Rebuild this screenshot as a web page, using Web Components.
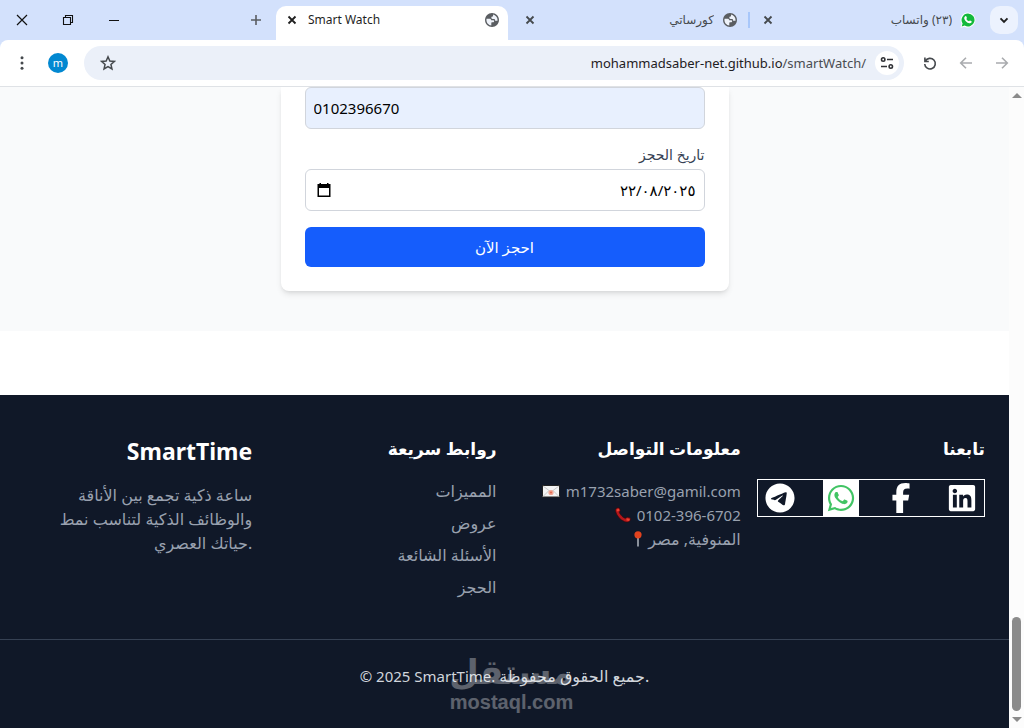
<!DOCTYPE html>
<html lang="ar">
<head>
<meta charset="utf-8">
<title>Smart Watch</title>
<style>
  html, body { margin: 0; height: 100%; }
  body { font-family: "Noto Sans", "DejaVu Sans", sans-serif; overflow: hidden; background: #fff; }
</style>
</head>
<body>
<browser-window>
  <tab-strip slot="chrome"></tab-strip>
  <tool-bar slot="chrome"></tool-bar>
  <booking-section></booking-section>
  <site-footer></site-footer>
  <scroll-track slot="scroll"></scroll-track>
</browser-window>

<script>
const ICONS = {
  close: ['0 0 16 16', '<path d="M4.500 4.500l7 7M11.500 4.500l-7 7" stroke="currentColor" stroke-width="1.800" fill="none"/>'],
  winclose: ['0 0 16 16', '<path d="M3 3l10 10M13 3L3 13" stroke="currentColor" stroke-width="1.200" fill="none"/>'],
  restore: ['0 0 16 16', '<path d="M3.500 5.500h7v7h-7zM5.500 5.500v-2h7v7h-2" stroke="currentColor" stroke-width="1.100" fill="none"/>'],
  minimize: ['0 0 16 16', '<path d="M3 8.500h10" stroke="currentColor" fill="none"/>'],
  plus: ['0 0 16 16', '<path d="M8 3v10M3 8h10" stroke="currentColor" stroke-width="1.600" fill="none"/>'],
  chevron: ['0 0 16 16', '<path d="M4.500 6.300L8 9.800l3.500-3.500" stroke="currentColor" stroke-width="1.900" fill="none"/>'],
  globe: ['0.500 0.500 23 23', '<path fill="currentColor" d="M12 2C6.480 2 2 6.480 2 12s4.480 10 10 10 10-4.480 10-10S17.520 2 12 2z"/><path fill="#eef2f9" d="M11 19.930c-3.950-.49-7-3.850-7-7.930 0-.62.08-1.210.21-1.790h4.300c1.500 0 2.200.9 2.400 2h2.600c1 0 1.500.6 1.500 1.500s-.6 1.500-1.500 1.500h-1.600c-.6 0-.9.400-.9 1zM13.500 4.200c3.700.8 6.500 4 6.500 7.800 0 .400 0 .700-.1 1h-2.400c-.9 0-1.500-.6-1.500-1.500v-1h-3.300c-1 0-1.700-.7-1.700-1.700s.7-1.700 1.700-1.700c.5 0 .8-.3.8-.8z"/>'],
  wabadge: ['0 0 16 16', '<path fill="#fff" d="M8 .5a7.500 7.500 0 1 1-3.500 14.200L.5 15.800l1.100-4A7.500 7.500 0 0 1 8 .5z"/><path fill="#13b93b" d="M8 1.500a6.500 6.500 0 1 1-3.300 12.100l-3 .9.900-3A6.500 6.500 0 0 1 8 1.500z"/><path fill="#fff" d="M5.300 4.200c.4-.3.8-.2 1 .2l.6 1.300c.1.300 0 .5-.6 1.200.6 1.100 1.500 1.900 2.700 2.400.7-.8.800-.9 1.100-.8l1.400.7c.3.200.3.600.1 1.100-.4.800-1.300 1.200-2.300 1-2.500-.6-4.400-2.500-5-4.600-.2-1 .2-1.900 1-2.500z"/>'],
  dots: ['0 0 16 16', '<g fill="currentColor"><circle cx="8" cy="2.700" r="1.500"/><circle cx="8" cy="8" r="1.500"/><circle cx="8" cy="13.300" r="1.500"/></g>'],
  star: ['0 0 16 16', '<path d="M8 1.800l1.850 4.150 4.500.45-3.400 3 1 4.450L8 11.500l-3.950 2.350 1-4.450-3.400-3 4.500-.45z" stroke="currentColor" stroke-width="1.500" fill="none"/>'],
  tune: ['0 0 16 16', '<g stroke="currentColor" stroke-width="1.600" fill="none"><circle cx="4.200" cy="4.500" r="1.700"/><path d="M8 4.500h6M2 11.500h6"/><circle cx="11.800" cy="11.500" r="1.700"/></g>'],
  reload: ['0 0 16 16', '<path d="M2.900 2.600v3.900h3.900M3.300 6.200A5.300 5.300 0 1 1 2.700 9" stroke="currentColor" stroke-width="1.600" fill="none"/>'],
  back: ['0 0 16 16', '<path d="M14 8H3M8 2.700L2.700 8 8 13.300" stroke="currentColor" stroke-width="1.600" fill="none"/>'],
  forward: ['0 0 16 16', '<path d="M2 8h11M8 2.700L13.300 8 8 13.300" stroke="currentColor" stroke-width="1.600" fill="none"/>'],
  calendar: ['0 0 16 16', '<path fill="currentColor" d="M3.500 1h1.500v1h6V1h1.500v1H14.500v13h-13V2h2zM3 6v7.500h10V6z" fill-rule="evenodd"/>'],
  telegram: ['0 0 496 512', '<path fill="currentColor" d="M248 8C111 8 0 119 0 256s111 248 248 248 248-111 248-248S385 8 248 8zm115 168.700c-3.700 39.200-19.900 134.400-28.100 178.300-3.500 18.600-10.300 24.800-16.900 25.400-14.400 1.300-25.300-9.500-39.300-18.700-21.800-14.300-34.200-23.200-55.300-37.200-24.500-16.100-8.600-25 5.300-39.500 3.700-3.800 67.100-61.500 68.300-66.700.2-.7.3-3.100-1.200-4.400s-3.600-.8-5.100-.5q-3.300.7-104.600 69.100-14.800 10.200-26.900 9.900c-8.900-.2-25.900-5-38.600-9.100-15.500-5-27.900-7.700-26.800-16.300q.8-6.700 18.500-13.700 108.400-47.200 144.600-62.300c68.900-28.600 83.200-33.600 92.500-33.800 2.100 0 6.600.5 9.600 2.900a10.500 10.500 0 0 1 3.500 6.700A43.800 43.800 0 0 1 363 176.700z"/>'],
  whatsapp: ['0 0 448 512', '<path fill="currentColor" d="M380.900 97.100C339 55.100 283.200 32 223.900 32c-122.400 0-222 99.600-222 222 0 39.100 10.200 77.300 29.600 111L0 480l117.700-30.900c32.400 17.700 68.900 27 106.100 27h.1c122.300 0 224.100-99.600 224.100-222 0-59.300-25.200-115-67.100-157zm-157 341.600c-33.200 0-65.700-8.900-94-25.700l-6.700-4-69.800 18.300L72 359.200l-4.400-7c-18.500-29.400-28.200-63.300-28.200-98.200 0-101.700 82.800-184.500 184.600-184.500 49.300 0 95.600 19.200 130.400 54.100 34.800 34.900 56.200 81.200 56.100 130.500 0 101.800-84.900 184.600-186.600 184.600zm101.200-138.200c-5.500-2.800-32.800-16.200-37.900-18-5.100-1.900-8.800-2.800-12.500 2.800-3.700 5.600-14.300 18-17.600 21.800-3.200 3.700-6.500 4.200-12 1.400-32.600-16.300-54-29.100-75.500-66-5.700-9.800 5.700-9.100 16.300-30.300 1.800-3.700.9-6.900-.5-9.700-1.400-2.800-12.500-30.100-17.100-41.200-4.500-10.800-9.100-9.300-12.500-9.500-3.200-.2-6.900-.2-10.600-.2-3.700 0-9.700 1.400-14.800 6.900-5.100 5.600-19.400 19-19.400 46.300 0 27.300 19.900 53.700 22.600 57.400 2.800 3.700 39.100 59.700 94.800 83.800 35.200 15.200 49 16.500 66.600 13.900 10.700-1.600 32.800-13.400 37.400-26.400 4.600-13 4.600-24.100 3.200-26.400-1.300-2.500-5-3.900-10.500-6.600z"/>'],
  facebook: ['0 0 320 512', '<path fill="currentColor" d="M80 299.300V512H196V299.300h86.500l18-97.800H196V166.900c0-51.700 20.300-71.500 72.700-71.500c16.300 0 29.400 .4 37 1.200V7.900C291.400 4 256.400 0 236.200 0C129.300 0 80 50.500 80 159.400v42.100H14v97.800H80z"/>'],
  linkedin: ['0 0 448 512', '<path fill="currentColor" d="M416 32H31.900C14.300 32 0 46.500 0 64.300v383.400C0 465.500 14.300 480 31.900 480H416c17.600 0 32-14.500 32-32.300V64.300c0-17.800-14.400-32.300-32-32.300zM135.400 416H69V202.200h66.500V416zm-33.200-243c-21.300 0-38.500-17.300-38.500-38.500S80.900 96 102.200 96c21.200 0 38.500 17.300 38.500 38.500 0 21.300-17.200 38.500-38.500 38.500zm282.100 243h-66.400V312c0-24.800-.5-56.700-34.500-56.700-34.600 0-39.900 27-39.900 54.900V416h-66.400V202.200h63.700v29.200h.9c8.900-16.800 30.600-34.500 62.900-34.500 67.200 0 79.700 44.300 79.700 101.900V416z"/>'],
  mail: ['0 0 18 16', '<rect x=".5" y="2.500" width="17" height="11.500" fill="#f4f4f4" stroke="#222"/><path d="M1 3l8 6 8-6M1 13.500l6-6M17 13.500l-6-6" fill="none" stroke="#c9c9c9"/><circle cx="9" cy="9.500" r="2.600" fill="#f0a593"/><circle cx="9" cy="9.500" r="1" fill="#e4644a"/>'],
  phone: ['0 0 16 16', '<path d="M1.200 1.600C2.200.6 3.600.5 4.300 1.300c.9 1 1.300 2.300.4 3.200-.6.600-.4 1.300.3 2.300 1.300 2 2.600 3.200 4.400 4.200.9.500 1.500.3 2-.3.700-.8 2.100-.6 3.400.1 1 .6.900 1.900.1 3-1 1.400-3.200 1.600-5.500.7C5 12.700 1.700 8.400.7 4.600.4 3.400.5 2.400 1.200 1.600z" fill="#b5171c" stroke="#3a0808" stroke-width=".6"/><path d="M1.600 2.400l2.300-.6.500 2-2.400.7zM11.700 11.200l3 .8-.5 2.100-2.800-.7z" fill="#ea4330"/>'],
  pin: ['0 0 8 16', '<path d="M3.200 7h1.600v8.500H3.200z" fill="#a9b0b8"/><circle cx="4" cy="3.800" r="3.600" fill="#e2431e"/>'],
};

/* Builds an element class whose shadow root is cloned from one shared template. */
function define(name, html, setup) {
  const template = document.createElement('template');
  template.innerHTML = `<style>*{box-sizing:border-box}</style>${html}`;
  customElements.define(name, class extends HTMLElement {
    constructor() {
      super();
      this.attachShadow({ mode: 'open' }).append(template.content.cloneNode(true));
    }
    connectedCallback() { if (setup) setup.call(this, this.shadowRoot); }
  });
}

define('ui-icon', `<style>
  :host { display: inline-flex; flex: none; width: 16px; height: 16px; }
  svg { width: 100%; height: 100%; display: block; }
</style><svg aria-hidden="true"></svg>`, function (root) {
  const [box, body] = ICONS[this.getAttribute('name')];
  const svg = root.querySelector('svg');
  svg.setAttribute('viewBox', box);
  svg.innerHTML = body;
});

define('icon-button', `<style>
  :host { display: block; flex: none; width: 28px; height: 28px; color: #45494d; }
  button { width: 100%; height: 100%; padding: 0; border: 0; border-radius: inherit; background: none;
    color: inherit; font: inherit; display: grid; place-items: center; }
</style><button type="button"><slot></slot></button>`, function (root) {
  root.querySelector('button').setAttribute('aria-label', this.getAttribute('label'));
});

define('browser-window', `<style>
  :host { display: flex; flex-direction: column; height: 100vh; }
  .view { flex: 1; min-height: 0; display: flex; border-top: 1px solid #dfe2e6; }
  main { flex: 1; min-width: 0; overflow: hidden; display: flex; flex-direction: column; }
</style><slot name="chrome"></slot>
<div class="view"><main><slot></slot></main><slot name="scroll"></slot></div>`);

define('browser-tab', `<style>
  :host { display: flex; align-items: center; gap: 8px; height: 34px; font-size: 12px; line-height: 16px; color: #45494d; }
  :host([active]) { background: #fff; border-radius: 10px 10px 0 0; color: #1f1f1f; }
  .title { flex: 1; min-width: 0; white-space: nowrap; overflow: hidden; }
  :host([rtl]) .title { direction: rtl; }
  icon-button { width: 16px; height: 16px; color: inherit; }
</style>
<icon-button label="إغلاق علامة التبويب"><ui-icon name="close"></ui-icon></icon-button>
<span class="title"><slot></slot></span><slot name="favicon"></slot>`);

define('tab-strip', `<style>
  :host { display: block; background: #d3e1fc; }
  .strip { display: flex; height: 40px; padding: 0 6px 0 0; align-items: center; }
  .controls { display: flex; gap: 2px; flex: 1; }
  .controls icon-button { width: 44px; height: 40px; color: #111; }
  .new { margin-right: 6px; }
  browser-tab { align-self: flex-end; }
  .one { width: 232px; padding: 0 8px 6px; }
  .two { width: 240px; padding: 0 10px 6px 14px; }
  .three { width: 234px; padding: 0 8px 6px 10px; margin-right: 6px; }
  .rule { width: 2px; height: 16px; background: #a8c7fa; }
  .list { background: #ecf2fe; border-radius: 10px; color: #1f1f1f; }
  ui-icon { color: #5a5d61; }
  .controls ui-icon, .list ui-icon { color: inherit; }
</style>
<div class="strip">
  <div class="controls">
    <icon-button label="إغلاق"><ui-icon name="winclose"></ui-icon></icon-button>
    <icon-button label="استعادة"><ui-icon name="restore"></ui-icon></icon-button>
    <icon-button label="تصغير"><ui-icon name="minimize"></ui-icon></icon-button>
  </div>
  <icon-button class="new" label="علامة تبويب جديدة"><ui-icon name="plus"></ui-icon></icon-button>
  <browser-tab class="one" active>Smart Watch<ui-icon slot="favicon" name="globe"></ui-icon></browser-tab>
  <browser-tab class="two" rtl>كورساتي<ui-icon slot="favicon" name="globe"></ui-icon></browser-tab>
  <span class="rule"></span>
  <browser-tab class="three" rtl>(٢٣) واتساب<ui-icon slot="favicon" name="wabadge"></ui-icon></browser-tab>
  <icon-button class="list" label="البحث في علامات التبويب"><ui-icon name="chevron"></ui-icon></icon-button>
</div>`);

define('tool-bar', `<style>
  :host { display: block; background: #d3e1fc; }
  .bar { display: flex; align-items: center; gap: 8px; height: 46px; padding: 0 8px; background: #fff; border-radius: 8px 8px 0 0; }
  .avatar { display: grid; place-items: center; width: 20px; height: 20px; border-radius: 50%; background: #0288d1; color: #fff; font-size: 11px; line-height: 20px; }
  .omni { flex: 1; min-width: 0; display: flex; align-items: center; height: 34px; margin: 0 4px; padding: 0 5px 0 10px; border-radius: 17px; background: #ebf0f9; }
  .url { flex: 1; min-width: 0; text-align: right; white-space: nowrap; font-size: 13px; line-height: 20px; color: #1f2023; padding-right: 9px; }
  .url span { color: #4a4d52; }
  .site { width: 24px; height: 24px; border-radius: 50%; background: #fff; color: #303236; }
  .off { color: #a9abae; }
</style>
<div class="bar">
  <icon-button label="القائمة"><ui-icon name="dots"></ui-icon></icon-button>
  <icon-button label="الملف الشخصي"><span class="avatar">m</span></icon-button>
  <div class="omni">
    <icon-button label="إضافة إشارة"><ui-icon name="star"></ui-icon></icon-button>
    <div class="url">mohammadsaber-net.github.io<span>/smartWatch/</span></div>
    <icon-button class="site" label="معلومات الموقع"><ui-icon name="tune"></ui-icon></icon-button>
  </div>
  <icon-button label="إعادة التحميل"><ui-icon name="reload"></ui-icon></icon-button>
  <icon-button class="off" label="رجوع"><ui-icon name="back"></ui-icon></icon-button>
  <icon-button class="off" label="للأمام"><ui-icon name="forward"></ui-icon></icon-button>
</div>`);

define('booking-section', `<style>
  :host { display: block; padding: 0 24px 40px; margin-bottom: 64px; background: #f9fafb; }
  form { display: flex; flex-direction: column; gap: 16px; max-width: 448px; margin: 0 auto; padding: 0 24px 24px; background: #fff;
    border-radius: 0 0 8px 8px; box-shadow: 0 4px 6px -1px rgba(0,0,0,.1), 0 2px 4px -2px rgba(0,0,0,.1); }
  .box { display: flex; align-items: center; height: 42px; border: 1px solid #d1d5dc; border-radius: 6px; background: #fff; padding: 0 8px; }
  .box.filled { background: #e8f0fe; }
  input { flex: 1; min-width: 0; width: 100%; padding: 0; border: 0; outline: 0; background: none; font: inherit; font-size: 15px; line-height: 24px; color: #000; }
  .date { text-align: right; }
  .field { display: flex; flex-direction: column; gap: 4px; }
  label { text-align: right; font-size: 14px; line-height: 20px; font-weight: 500; color: #364153; }
  .box icon-button { width: 20px; height: 20px; color: #000; }
  .submit { height: 40px; border: 0; border-radius: 6px; background: #155dfc; color: #fff; font: inherit; font-size: 15px; line-height: 24px; padding: 0; }
</style>
<form>
  <div class="box filled"><input type="tel" value="0102396670" aria-label="رقم الهاتف"></div>
  <div class="field">
    <label for="date">تاريخ الحجز</label>
    <div class="box">
      <icon-button label="فتح التقويم"><ui-icon name="calendar"></ui-icon></icon-button>
      <input id="date" class="date" type="text" value="٢٢/٠٨/٢٠٢٥">
    </div>
  </div>
  <button class="submit" type="submit">احجز الآن</button>
</form>`);

define('footer-column', `<style>
  :host { display: flex; flex-direction: column; gap: 16px; min-width: 0; text-align: right; }
  h3 { margin: 0; font-size: 17px; line-height: 28px; font-weight: 600; color: #fff; }
</style><h3></h3><slot></slot>`, function (root) {
  root.querySelector('h3').textContent = this.getAttribute('heading');
});

define('water-mark', `<style>
  :host { position: absolute; left: 50%; bottom: 14px; width: 124px; margin-left: -55px; display: flex; flex-direction: column; align-items: center;
    color: #fff; opacity: .32; font-family: "Liberation Sans", "DejaVu Sans", sans-serif; font-weight: 700; pointer-events: none; white-space: nowrap; }
  .ar { font-size: 34px; line-height: 36px; }
  .en { font-size: 20px; line-height: 24px; }
</style><span class="ar">مستقل</span><span class="en">mostaql.com</span>`);

define('site-footer', `<style>
  :host { display: block; position: relative; flex: 1; padding-top: 40px; background: #101828; color: #99a1af; font-size: 16px; line-height: 24px; }
  .cols { display: grid; grid-template-columns: repeat(4, minmax(0, 1fr)); gap: 16px; padding: 0 24px 40px; }
  .brand { text-align: right; padding-left: 24px; }
  h2 { margin: 0 0 16px; font-size: 23px; line-height: 32px; font-weight: 700; color: #fff; }
  p { margin: 0; }
  ul { list-style: none; margin: 0; padding: 0; }
  .links { display: flex; flex-direction: column; gap: 8px; }
  a { color: inherit; text-decoration: none; }
  .contact { font-size: 15px; }
  .contact li { display: flex; justify-content: flex-end; align-items: center; gap: 6px; white-space: nowrap; }
  .ar { font-size: 16px; }
  .mail { width: 18px; } .pin { width: 8px; }
  .social { display: flex; justify-content: space-between; height: 38px; padding: 0 4px; border: 1px solid #fff; }
  .social a { display: grid; place-items: center; width: 36px; color: #fff; }
  .social ui-icon { width: 30px; height: 30px; }
  .social a.wa { background: #fff; color: #41c464; }
  .copy { border-top: 1px solid #364153; padding: 24px; text-align: center; color: #d1d5dc; font-size: 15px; }
</style>
<div class="cols">
  <div class="brand"><h2>SmartTime</h2><p>ساعة ذكية تجمع بين الأناقة والوظائف الذكية لتناسب نمط حياتك العصري.</p></div>
  <footer-column heading="روابط سريعة"><ul class="links">
    <li><a href="#features">المميزات</a></li><li><a href="#offers">عروض</a></li>
    <li><a href="#faq">الأسئلة الشائعة</a></li><li><a href="#booking">الحجز</a></li></ul></footer-column>
  <footer-column heading="معلومات التواصل"><ul class="contact">
    <li><ui-icon class="mail" name="mail"></ui-icon><span>m1732saber@gamil.com</span></li>
    <li><ui-icon name="phone"></ui-icon><span>0102-396-6702</span></li>
    <li><ui-icon class="pin" name="pin"></ui-icon><span class="ar">المنوفية, مصر</span></li></ul></footer-column>
  <footer-column heading="تابعنا"><div class="social">
    <a href="#telegram" aria-label="Telegram"><ui-icon name="telegram"></ui-icon></a>
    <a class="wa" href="#whatsapp" aria-label="WhatsApp"><ui-icon name="whatsapp"></ui-icon></a>
    <a href="#facebook" aria-label="Facebook"><ui-icon name="facebook"></ui-icon></a>
    <a href="#linkedin" aria-label="LinkedIn"><ui-icon name="linkedin"></ui-icon></a></div></footer-column>
</div>
<div class="copy">© 2025 SmartTime. <span class="ar">جميع الحقوق محفوظة.</span></div>
<water-mark></water-mark>`);

define('scroll-track', `<style>
  :host { display: flex; flex-direction: column; align-items: center; width: 15px; flex: none; background: #fcfcfc; padding: 6px 0; }
  i { border: 5px solid transparent; border-top: 0; border-bottom: 5px solid #8b8b8b; }
  i.down { border-top: 5px solid #8b8b8b; border-bottom: 0; }
  .space { flex: 1; }
  .thumb { width: 9px; height: 15%; margin-bottom: 6px; border-radius: 5px; background: #8b8b8b; }
</style><i></i><span class="space"></span><span class="thumb"></span><i class="down"></i>`);
</script>
</body>
</html>
